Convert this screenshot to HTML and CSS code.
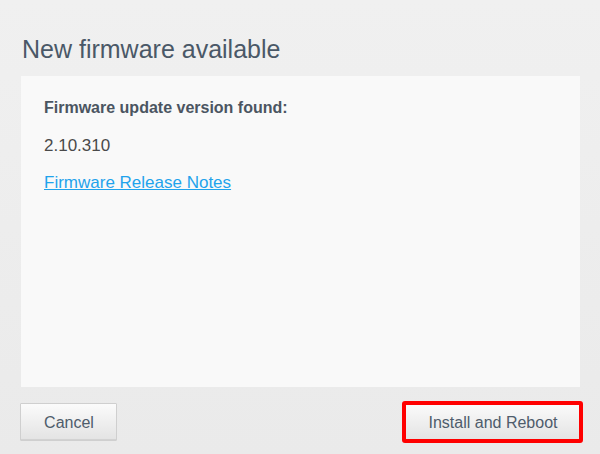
FILE: index.html
```html
<!DOCTYPE html>
<html>
<head>
<meta charset="utf-8">
<link rel="stylesheet" href="styles.css">
</head>
<body>
<div class="dialog">
  <h1 class="title">New firmware available</h1>
  <div class="panel">
    <div class="label">Firmware update version found:</div>
    <div class="version">2.10.310</div>
    <a class="link" href="#">Firmware Release Notes</a>
  </div>
  <div class="actions">
    <button class="btn btn-cancel">Cancel</button>
    <button class="btn btn-install">Install and Reboot</button>
  </div>
</div>
</body>
</html>
```
FILE: styles.css
```css
html, body {
  margin: 0;
  padding: 0;
}
body {
  width: 600px;
  height: 454px;
  background: linear-gradient(#f0f0f0, #eaeaea);
  font-family: "Liberation Sans", Arial, sans-serif;
  overflow: hidden;
}
.dialog {
  padding: 35px 19px 0 20px;
  display: flex;
  flex-direction: column;
}
.title {
  margin: 0 0 13px 2px;
  font-size: 25px;
  line-height: 28px;
  font-weight: normal;
  color: #4a5867;
}
.panel {
  margin: 0 1px;
  height: 311px;
  box-sizing: border-box;
  background: #f9f9f9;
  padding: 22px 23px;
  display: flex;
  flex-direction: column;
  align-items: flex-start;
  gap: 17px;
}
.label {
  font-size: 16px;
  line-height: 20px;
  font-weight: bold;
  color: #4b5561;
}
.version {
  font-size: 17px;
  line-height: 21px;
  color: #4a4a4a;
}
.link {
  font-size: 17px;
  line-height: 20px;
  color: #1fa3ec;
  text-decoration: underline;
}
.actions {
  margin-top: 16px;
  display: flex;
  justify-content: space-between;
  align-items: center;
}
.btn {
  height: 38px;
  box-sizing: border-box;
  border: 1px solid #cfcfcf;
  border-radius: 1px;
  background: linear-gradient(#fbfbfb, #e3e3e3);
  box-shadow: inset 0 -1px 0 #d2d2d2;
  font-family: "Liberation Sans", Arial, sans-serif;
  font-size: 16px;
  color: #4e5c6b;
  padding: 2px 0 0 1px;
}
.btn-cancel {
  width: 97px;
}
.btn-install {
  width: 177px;
  outline: 4px solid #ff0000;
  outline-offset: -2px;
}
```
